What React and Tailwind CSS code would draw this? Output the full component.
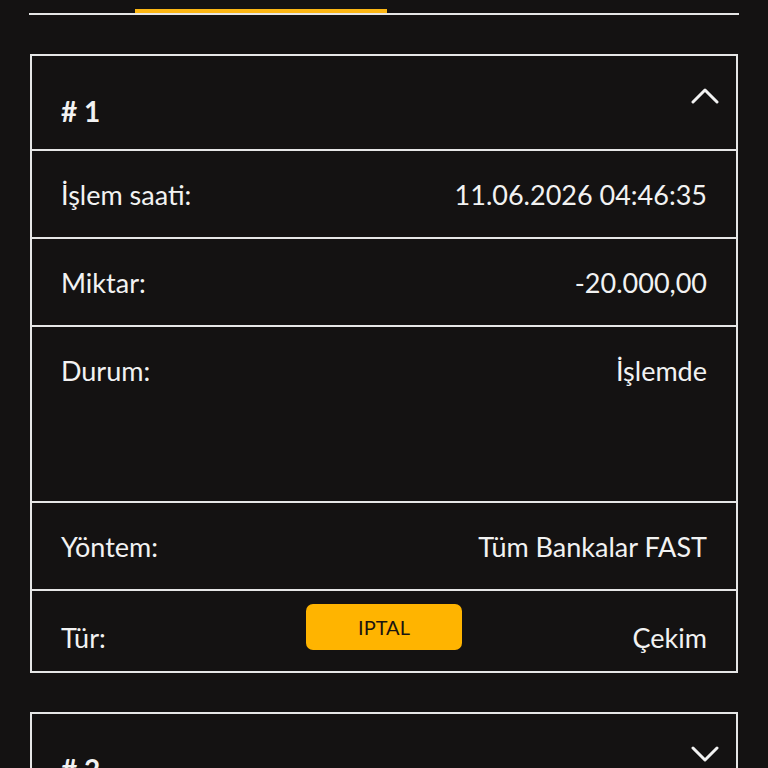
import React from "react";

const rows = [
  { label: "İşlem saati:", value: "11.06.2026 04:46:35", h: "h-[88px]" },
  { label: "Miktar:", value: "-20.000,00", h: "h-[88px]" },
  { label: "Durum:", value: "İşlemde", h: "h-[176px]" },
  { label: "Yöntem:", value: "Tüm Bankalar FAST", h: "h-[88px]" },
];

const Chevron = ({ up }) => (
  <svg width="28" height="16" viewBox="0 0 28 16" fill="none" className="mr-[17px] mt-[32px]">
    <polyline
      points={up ? "2,14 14,2 26,14" : "2,2 14,14 26,2"}
      stroke="#f2f2f2"
      strokeWidth="3"
      strokeLinecap="round"
      strokeLinejoin="round"
    />
  </svg>
);

const CardHeader = ({ num, open }) => (
  <div className="flex justify-between items-start h-[93px]">
    <div className="pl-[29px] pt-[39px] text-[28px] leading-[32px] font-bold">
      # {num}
    </div>
    <Chevron up={open} />
  </div>
);

const App = () => {
  return (
    <div
      className="min-h-screen bg-[#141212] text-[#f2f2f2] px-[30px] overflow-hidden"
      style={{ fontFamily: "Lato, 'Noto Sans', sans-serif" }}
    >
      {/* tabs underline */}
      <div className="h-[15px] border-b-2 border-[#e6e6e6] flex items-end -mx-[1px]">
        <div className="ml-[106px] w-[252px] h-[4px] bg-[#fbb614]" />
      </div>

      {/* CARD 1 */}
      <div className="mt-[39px] border-2 border-[#e6e6e6]">
        <CardHeader num="1" open />
        {rows.map((r) => (
          <div key={r.label} className={`border-t-2 border-[#e6e6e6] ${r.h}`}>
            <div className="flex justify-between px-[29px] pt-[28px] text-[27px] leading-[32px]">
              <span>{r.label}</span>
              <span>{r.value}</span>
            </div>
          </div>
        ))}
        <div className="border-t-2 border-[#e6e6e6] h-[82px] grid grid-cols-[1fr_auto_1fr] px-[29px] items-start text-[27px] leading-[32px]">
          <span className="pt-[31px]">Tür:</span>
          <button className="mt-[13px] w-[156px] h-[46px] rounded-[7px] bg-[#ffb400] text-[#1a1410] text-[20px] leading-[24px]">
            IPTAL
          </button>
          <span className="pt-[31px] text-right">Çekim</span>
        </div>
      </div>

      {/* CARD 2 */}
      <div className="mt-[39px] border-2 border-[#e6e6e6]">
        <CardHeader num="2" />
      </div>
    </div>
  );
};

export default App;
